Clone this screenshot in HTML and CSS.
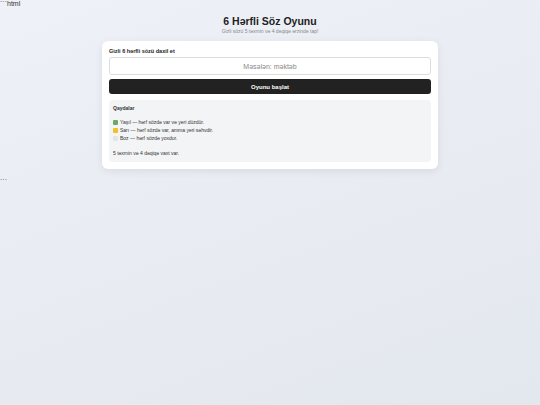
FILE: index.html
```html
<!DOCTYPE html>
<html lang="az">
<head>
    <meta charset="UTF-8">
    <meta name="viewport" content="width=device-width, initial-scale=1.0">
    <title>6 Hərfli Söz Oyunu</title>
    <link rel="stylesheet" href="styles.css">
</head>
<body>
    <p class="stray">```html</p>
    <div class="container">
        <header>
            <h1>6 Hərfli Söz Oyunu</h1>
            <p class="subtitle">Gizli sözü 5 təxmin və 4 dəqiqə ərzində tap!</p>
        </header>

        <section class="card">
            <form id="setup-form">
                <label for="secret-word">Gizli 6 hərfli sözü daxil et</label>
                <input type="text" id="secret-word" placeholder="Məsələn: məktəb" maxlength="6">
                <button type="submit" class="button">Oyunu başlat</button>
            </form>

            <div class="rules">
                <h2>Qaydalar</h2>
                <ul>
                    <li><span class="swatch green"></span>Yaşıl — hərf sözdə var və yeri düzdür.</li>
                    <li><span class="swatch yellow"></span>Sarı — hərf sözdə var, amma yeri səhvdir.</li>
                    <li><span class="swatch gray"></span>Boz — hərf sözdə yoxdur.</li>
                </ul>
                <p>5 təxmin və 4 dəqiqə vaxt var.</p>
            </div>
        </section>
    </div>
    <p class="stray">```</p>
</body>
</html>
```

FILE: styles.css
```css
/* Basic Reset */
* {
    box-sizing: border-box;
    margin: 0;
    padding: 0;
}
body {
    font-family: 'Liberation Sans', Arial, sans-serif;
    background: linear-gradient(160deg, #eef1f7 0%, #e3e7ee 100%);
    min-height: 405px;
    color: #222;
}
.stray {
    font-size: 7px;
    line-height: 8px;
    color: #333;
}
.container {
    max-width: 336px;
    margin: 0 auto;
    padding: 6px 0 9px;
}
header {
    text-align: center;
    margin-bottom: 6px;
}
h1 {
    font-size: 10.5px;
    line-height: 14px;
    color: #222;
}
.subtitle {
    font-size: 5px;
    line-height: 7px;
    color: #888;
}
.card {
    background: #fff;
    border-radius: 6px;
    padding: 6px 7px 7px;
    box-shadow: 0 2px 8px rgba(0,0,0,0.08);
}
form {
    display: flex;
    flex-direction: column;
}
label {
    font-size: 5.5px;
    font-weight: bold;
    line-height: 8px;
    margin-bottom: 2px;
}
input[type="text"] {
    height: 18px;
    border: 1px solid #ddd;
    border-radius: 3px;
    text-align: center;
    font-family: inherit;
    font-size: 7px;
    margin-bottom: 4px;
}
input::placeholder {
    color: #888;
}
.button {
    height: 15px;
    background: #222;
    color: #fff;
    border: none;
    border-radius: 3px;
    font-family: inherit;
    font-size: 6px;
    font-weight: bold;
    cursor: pointer;
}
.rules {
    margin-top: 6px;
    background: #f3f4f6;
    border-radius: 4px;
    padding: 4px 4px 5px;
    font-size: 5px;
    line-height: 8px;
    color: #333;
}
.rules h2 {
    font-size: 5px;
    margin-bottom: 6px;
}
.rules ul {
    list-style: none;
    margin-bottom: 7px;
}
.rules li {
    display: flex;
    align-items: center;
}
.swatch {
    width: 5px;
    height: 5px;
    border-radius: 1px;
    margin-right: 2px;
}
.green { background: #6aaa64; }
.yellow { background: #f2c029; }
.gray { background: #e3e4e6; }
```
